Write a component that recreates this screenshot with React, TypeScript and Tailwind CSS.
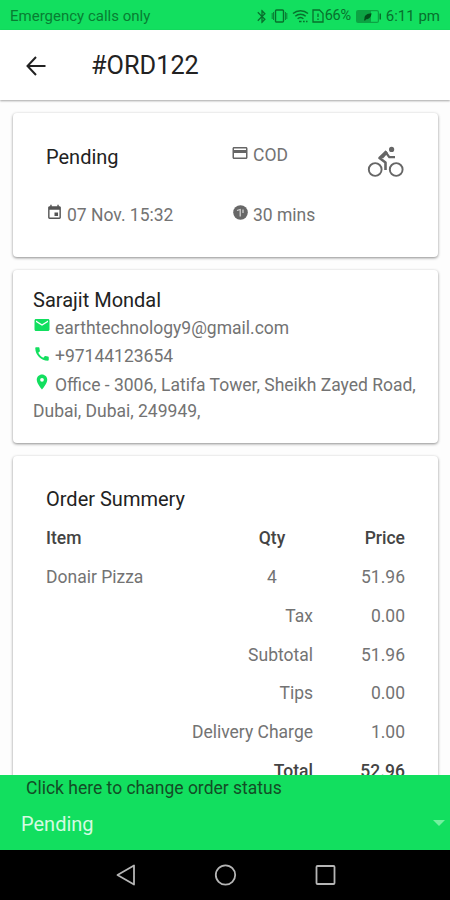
import { MdBluetooth, MdCall, MdCreditCard, MdEmail, MdEvent, MdLocationOn } from "react-icons/md";

const totals = [
  { label: "Tax", value: "0.00" },
  { label: "Subtotal", value: "51.96" },
  { label: "Tips", value: "0.00" },
  { label: "Delivery Charge", value: "1.00" },
];

function StatusBar() {
  return (
    <div className="h-[30px] shrink-0 bg-[#12df5f] flex items-center pt-[2px] pl-[10px] pr-[10px] text-[15px] text-[#087d32]">
      <span>Emergency calls only</span>
      <div className="ml-auto flex items-center text-[#08702d]">
        <MdBluetooth className="w-[16px] h-[17px]" />
        {/* vibrate */}
        <svg className="w-[17px] h-[14px] ml-px" viewBox="0 0 17 14" fill="none" stroke="currentColor" strokeWidth="1.4">
          <rect x="4.5" y="1" width="8" height="12" rx="1" />
          <path d="M1.2 4v6M15.8 4v6M2.5 3v8M14.5 3v8" strokeWidth="0.8" />
        </svg>
        {/* wifi */}
        <svg className="w-[17px] h-[14px] ml-[4px]" viewBox="0 0 17 14" fill="none" stroke="currentColor" strokeWidth="1.5">
          <path d="M1 4.5C5.3.7 11.7.7 16 4.5M3.3 7.2c3-2.7 7.4-2.7 10.4 0M5.6 9.7c1.7-1.5 4.100-1.5 5.8 0" />
          <path d="M7 12.5h2.5M11 12.5h1.7M14 12.5h1.5" />
        </svg>
        {/* sim */}
        <svg className="w-[12px] h-[14px] ml-[3px]" viewBox="0 0 12 14" fill="none" stroke="currentColor" strokeWidth="1.3">
          <path d="M1 1h6.5L11 4.5V13H1zM6 4.5V8M6 9.5V11" />
        </svg>
        <span className="ml-px w-[28px] text-[14.5px] tracking-[-0.3px]">66%</span>
        {/* battery */}
        <svg className="w-[26px] h-[13px] ml-[3px]" viewBox="0 0 26 13">
          <rect x="0.6" y="0.6" width="21.8" height="11.8" rx="1.5" fill="none" stroke="#0ca343" strokeWidth="1.2" />
          <rect x="1" y="1" width="14" height="11" fill="#0ca343" />
          <path d="M23.5 3.5H25v6h-1.5z" fill="#08702d" />
          <path d="M15.500 3.200c-4 .2-7 1.800-7 5L8 10.500h1.300l.7-1.300c3.500 0 5.200-2.500 5.500-6z" fill="#034d1b" />
        </svg>
        <span className="ml-[4px]">6:11 pm</span>
      </div>
    </div>
  );
}

function Clock() {
  return (
    <svg className="w-[15px] h-[15px]" viewBox="0 0 15 15">
      <circle cx="7.5" cy="7.5" r="7.3" fill="#686868" />
      <path d="M4 5.500l3.200-1v7M10 4.500v3.500" fill="none" stroke="#d8d8d8" strokeWidth="1.2" />
    </svg>
  );
}

function Cyclist() {
  return (
    <svg className="w-[37px] h-[32px]" viewBox="0 0 37 32" fill="none" stroke="#666" strokeWidth="1.9">
      <circle cx="8.2" cy="23.5" r="6.4" />
      <circle cx="29.2" cy="23.5" r="6.4" />
      <circle cx="24.600" cy="3.400" r="2.600" fill="#666" stroke="none" />
      <path d="M19.500 5.500l-7 6.500 6 4.500V24" strokeWidth="2.600" strokeLinejoin="round" />
      <path d="M18.500 6l3.800 5.200H28" strokeWidth="2.300" />
      <path d="M18.500 4.500l2.500 2.500-5 5.500-3-1.500z" fill="#666" stroke="none" />
    </svg>
  );
}

export default function App() {
  return (
    <div className="w-[450px] h-[900px] flex flex-col overflow-hidden bg-[#fdfdfd] font-[Roboto,sans-serif] text-[17.5px] text-[#737373] whitespace-nowrap">
      <StatusBar />
      <header className="h-[70px] shrink-0 flex items-center bg-white pl-[26px] shadow-[0_1px_2px_rgba(0,0,0,0.35)]">
        <svg className="w-[20px] h-[20px] mt-px" viewBox="0 0 20 20" fill="none" stroke="#222" strokeWidth="2">
          <path d="M10 1L1.5 10l8.5 9M1.5 10H19.5" />
        </svg>
        <h1 className="ml-[45px] mt-[2px] text-[25.3px] font-normal text-[#222]">#ORD122</h1>
      </header>

      <main className="flex-1 min-h-0 overflow-hidden flex flex-col gap-[13px] pt-[13px] pl-[13px] pr-[12px]">
        <section className="h-[144px] shrink-0 rounded-[4px] bg-white shadow-[0_1px_3px_rgba(0,0,0,0.45)] px-[33px] pt-[28px]">
          <div className="flex h-[30px] items-center">
            <div className="w-[186px] pt-px text-[20px] text-[#222]">Pending</div>
            <div className="flex items-center">
              <MdCreditCard className="w-[18px] h-[18px] -mt-[7px] -ml-px text-[#666]" />
              <span className="ml-[4px] -mt-[2px]">COD</span>
            </div>
            <div className="ml-auto mr-px mt-[11px]">
              <Cyclist />
            </div>
          </div>
          <div className="mt-[29px] flex h-[30px] items-center">
            <div className="flex w-[186px] items-center">
              <MdEvent className="w-[17px] h-[17px] -mt-[6px] text-[#555]" />
              <span className="ml-[4px]">07 Nov. 15:32</span>
            </div>
            <div className="flex items-center">
              <span className="-mt-[5px] ml-px"><Clock /></span>
              <span className="ml-[5px]">30 mins</span>
            </div>
          </div>
        </section>

        <section className="h-[173px] shrink-0 rounded-[4px] bg-white shadow-[0_1px_3px_rgba(0,0,0,0.45)] pl-[20px] pt-[17px]">
          <h2 className="h-[27px] leading-[27px] text-[20px] text-[#222]">Sarajit Mondal</h2>
          <div className="h-[28px] flex items-center">
            <MdEmail className="w-[18px] h-[18px] -mt-[6px] text-[#12df5f]" />
            <span className="ml-[4px]">earthtechnology9@gmail.com</span>
          </div>
          <div className="h-[29px] flex items-center">
            <MdCall className="w-[18px] h-[18px] -mt-[6px] text-[#12df5f]" />
            <span className="ml-[4px]">+97144123654</span>
          </div>
          <div className="h-[28px] flex items-center">
            <MdLocationOn className="w-[18px] h-[18px] -mt-[6px] text-[#12df5f]" />
            <span className="ml-[4px]">Office - 3006, Latifa Tower, Sheikh Zayed Road,</span>
          </div>
          <div className="-mt-px leading-[26px]">Dubai, Dubai, 249949,</div>
        </section>

        <section className="h-[400px] shrink-0 rounded-[4px] bg-white shadow-[0_1px_3px_rgba(0,0,0,0.45)] px-[33px] pt-[30px]">
          <h2 className="h-[26px] leading-[26px] text-[20px] text-[#222]">Order Summery</h2>
          <div className="mt-[7px] flex h-[38.8px] items-center font-medium text-[#444]">
            <span className="w-[186px]">Item</span>
            <span className="w-[80px] text-center">Qty</span>
            <span className="ml-auto">Price</span>
          </div>
          <div className="flex h-[38.8px] items-center">
            <span className="w-[186px]">Donair Pizza</span>
            <span className="w-[80px] text-center">4</span>
            <span className="ml-auto">51.96</span>
          </div>
          {totals.map((row) => (
            <div key={row.label} className="flex h-[38.8px] items-center">
              <span className="w-[267px] text-right">{row.label}</span>
              <span className="ml-auto">{row.value}</span>
            </div>
          ))}
          <div className="flex h-[38.8px] items-center font-medium text-[#444]">
            <span className="w-[267px] text-right">Total</span>
            <span className="ml-auto">52.96</span>
          </div>
        </section>
      </main>

      <footer className="h-[75px] shrink-0 bg-[#12df5f]">
        <div className="h-[26px] pl-[26px] leading-[26px] text-[#134d26]">Click here to change order status</div>
        <div className="flex h-[46px] items-center pl-[21px] pr-[5px]">
          <span className="text-[20px] text-[#d5fbe2]">Pending</span>
          <svg className="ml-auto mt-[-2px] w-[12px] h-[6px]" viewBox="0 0 12 6" fill="#74f09f">
            <path d="M0 0h12L6 6z" />
          </svg>
        </div>
      </footer>
      <nav className="flex h-[50px] shrink-0 items-center justify-center bg-black text-[#b5b5b5]">
        <svg className="w-[222px] h-[24px]" viewBox="0 0 222 24" fill="none" stroke="currentColor" strokeWidth="1.8" strokeLinejoin="round">
          <path d="M20 2.5v19L3.5 12z" />
          <circle cx="111.5" cy="12" r="9.7" />
          <rect x="202.5" y="3" width="18" height="18" rx="1" />
        </svg>
      </nav>
    </div>
  );
}
